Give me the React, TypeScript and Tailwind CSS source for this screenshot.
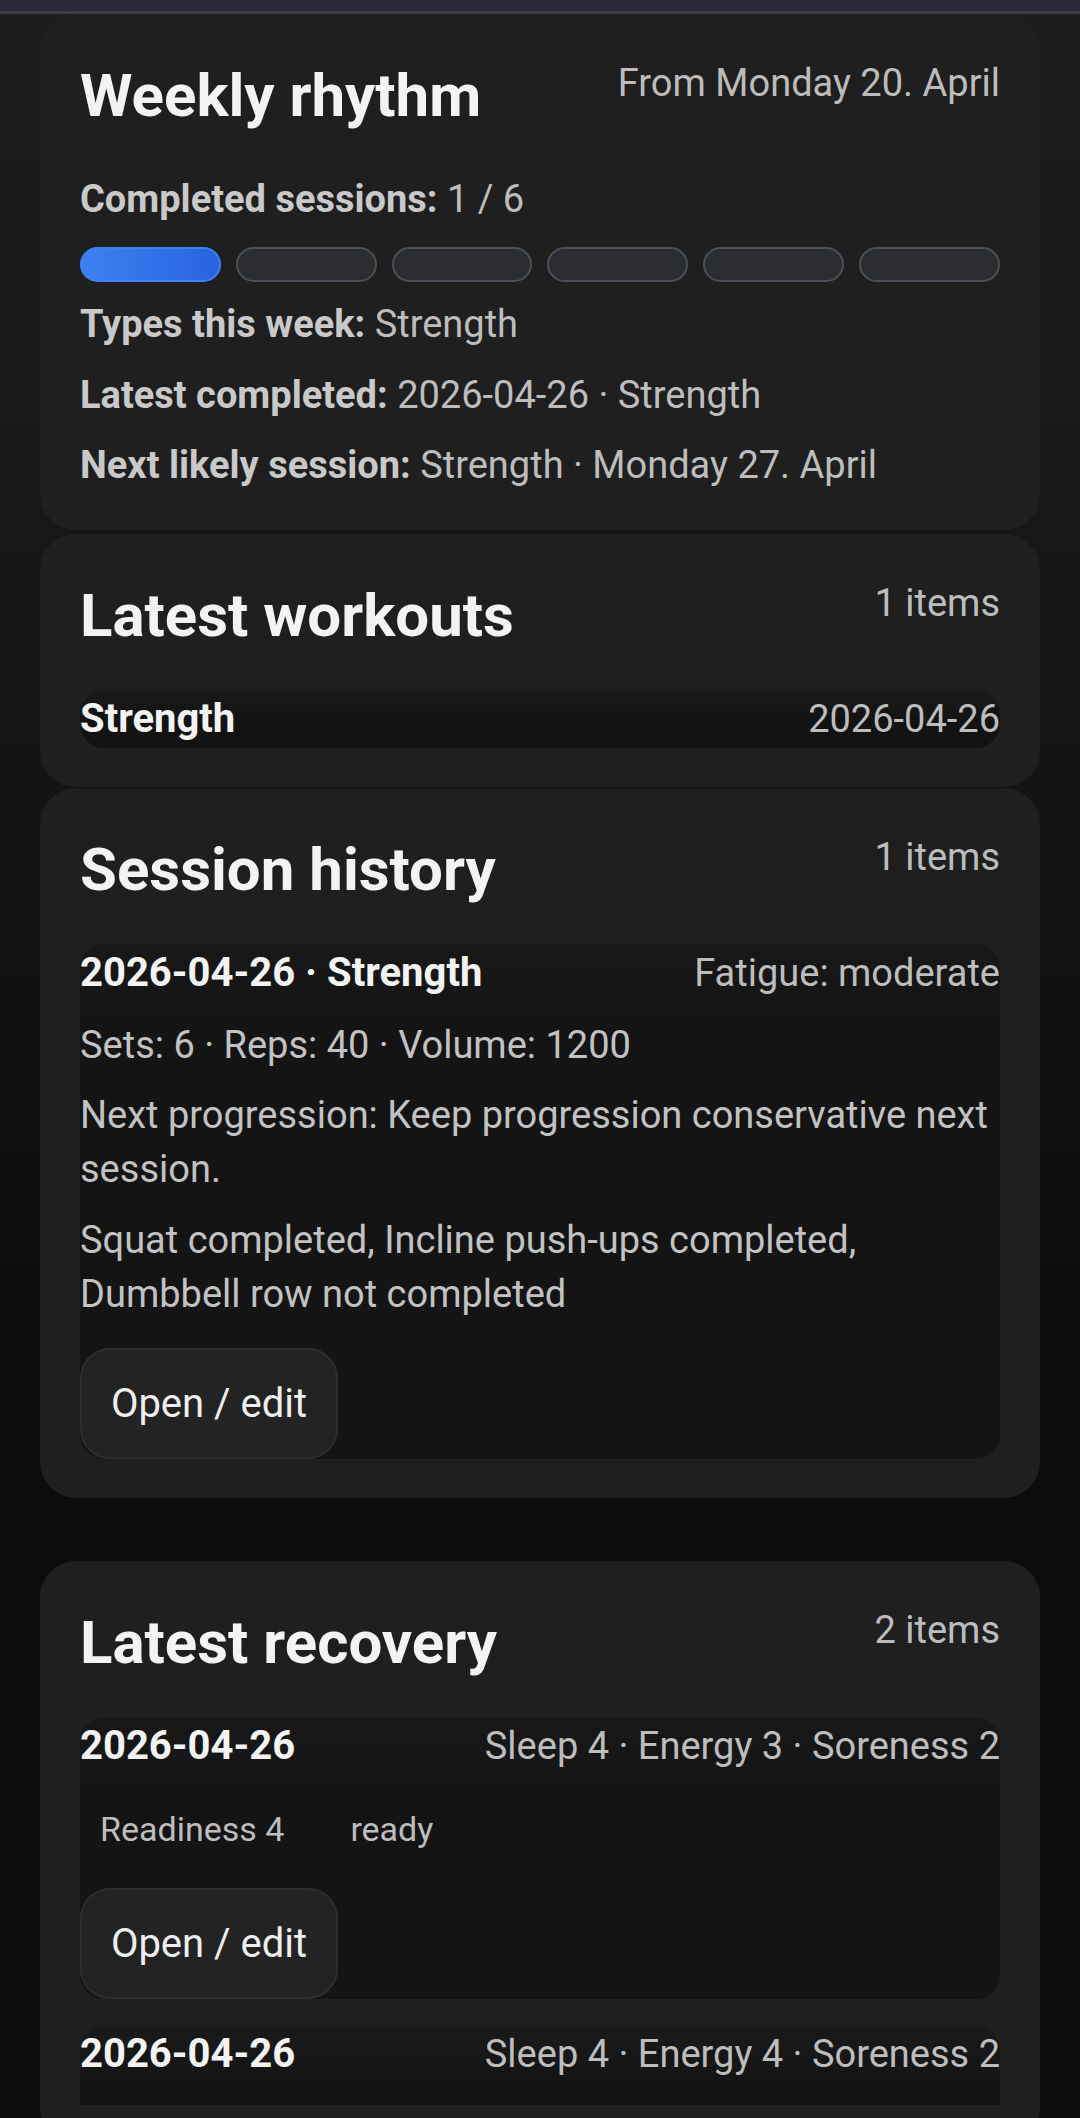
import React from "react";

const FONT = { fontFamily: "Roboto, 'Noto Sans', Arial, sans-serif" };

function Card({ children, className = "" }: { children: React.ReactNode; className?: string }) {
  return (
    <section className={`rounded-[36px] bg-[#1f1f1f] px-[40px] pt-[45px] pb-[39px] ${className}`}>
      {children}
    </section>
  );
}

function CardHeader({ title, meta }: { title: string; meta: string }) {
  return (
    <div className="flex items-start justify-between">
      <h2 className="text-[60px] leading-[74px] font-bold text-[#f3f3f3]">{title}</h2>
      <span className="text-[38px] leading-[48px] text-[#bcbcbc]">{meta}</span>
    </div>
  );
}

function InfoLine({ label, value, className = "" }: { label: string; value: string; className?: string }) {
  return (
    <p className={`text-[38px] leading-[52px] text-[#bdbdbd] ${className}`}>
      <span className="font-bold text-[#c9c9c9]">{label}</span> {value}
    </p>
  );
}

function Button() {
  return (
    <button className="h-[111px] w-[258px] rounded-[30px] border-2 border-[#2e2e2e] bg-[#232323] text-[40px] text-[#eeeeee]">
      Open / edit
    </button>
  );
}

function BoxHead({ left, right }: { left: string; right: string }) {
  return (
    <div className="flex items-center justify-between h-[58px] leading-[58px]">
      <span className="text-[40px] font-bold text-[#f3f3f3]">{left}</span>
      <span className="text-[38px] text-[#bdbdbd]">{right}</span>
    </div>
  );
}

export default function App() {
  return (
    <div
      style={FONT}
      className="min-h-[2118px] w-[1080px] flex flex-col bg-[linear-gradient(180deg,#1d1d1d_0px,#151515_700px,#0c0c0c_1400px,#0d0d0d_2118px)]"
    >
      <div className="h-[14px] bg-[#2a2937] border-b-[3px] border-[#3d3c46] shrink-0" />
      <main className="flex-1 px-[40px] flex flex-col">
        <Card>
          <CardHeader title="Weekly rhythm" meta="From Monday 20. April" />
          <InfoLine className="mt-[40px]" label="Completed sessions:" value="1 / 6" />
          <div className="mt-[22px] flex gap-[15px]">
            <div className="h-[35px] flex-1 rounded-full border-2 border-[#3b82f6] bg-[linear-gradient(90deg,#3d80f0,#2863e0)]" />
            <div className="h-[35px] flex-1 rounded-full border-2 border-[#4b4f57] bg-[#2b2d31]" />
            <div className="h-[35px] flex-1 rounded-full border-2 border-[#4b4f57] bg-[#2b2d31]" />
            <div className="h-[35px] flex-1 rounded-full border-2 border-[#4b4f57] bg-[#2b2d31]" />
            <div className="h-[35px] flex-1 rounded-full border-2 border-[#4b4f57] bg-[#2b2d31]" />
            <div className="h-[35px] flex-1 rounded-full border-2 border-[#4b4f57] bg-[#2b2d31]" />
          </div>
          <InfoLine className="mt-[16px]" label="Types this week:" value="Strength" />
          <InfoLine className="mt-[19px]" label="Latest completed:" value="2026-04-26 · Strength" />
          <InfoLine className="mt-[18px]" label="Next likely session:" value="Strength · Monday 27. April" />
        </Card>

        <Card className="mt-[4px]">
          <CardHeader title="Latest workouts" meta="1 items" />
          <div className="mt-[37px] rounded-[24px] bg-[linear-gradient(180deg,#1a1a1a,#131313_50%,#121212)]">
            <BoxHead left="Strength" right="2026-04-26" />
          </div>
        </Card>

        <Card className="mt-[1px]">
          <CardHeader title="Session history" meta="1 items" />
          <div className="mt-[37px] rounded-[24px] bg-[linear-gradient(180deg,#181818,#141414_80px,#141414)]">
            <BoxHead left="2026-04-26 · Strength" right="Fatigue: moderate" />
            <div className="text-[38px] leading-[54px] text-[#c2c2c2]">
              <p className="mt-[16px]">Sets: 6 · Reps: 40 · Volume: 1200</p>
              <p className="mt-[16px]">Next progression: Keep progression conservative next session.</p>
              <p className="mt-[17px]">Squat completed, Incline push-ups completed, Dumbbell row not completed</p>
            </div>
            <div className="mt-[27px]">
              <Button />
            </div>
          </div>
        </Card>

        <Card className="mt-[63px] flex-1 pb-0">
          <CardHeader title="Latest recovery" meta="2 items" />
          <div className="mt-[37px] rounded-[24px] bg-[linear-gradient(180deg,#181818,#141414_80px,#141414)]">
            <BoxHead left="2026-04-26" right="Sleep 4 · Energy 3 · Soreness 2" />
            <div className="mt-[21px] flex gap-[26px] text-[34px] leading-[42px] text-[#bdbdbd]">
              <span className="px-[20px] py-[12px] rounded-full">Readiness 4</span>
              <span className="px-[20px] py-[12px] rounded-full">ready</span>
            </div>
            <div className="mt-[26px]">
              <Button />
            </div>
          </div>
          <div className="mt-[26px] rounded-t-[24px] bg-[linear-gradient(180deg,#1a1a1a,#141414_60px)] h-[80px]">
            <BoxHead left="2026-04-26" right="Sleep 4 · Energy 4 · Soreness 2" />
          </div>
        </Card>
      </main>
      <div className="h-[21px] bg-[#2a2937] shrink-0" />
    </div>
  );
}
